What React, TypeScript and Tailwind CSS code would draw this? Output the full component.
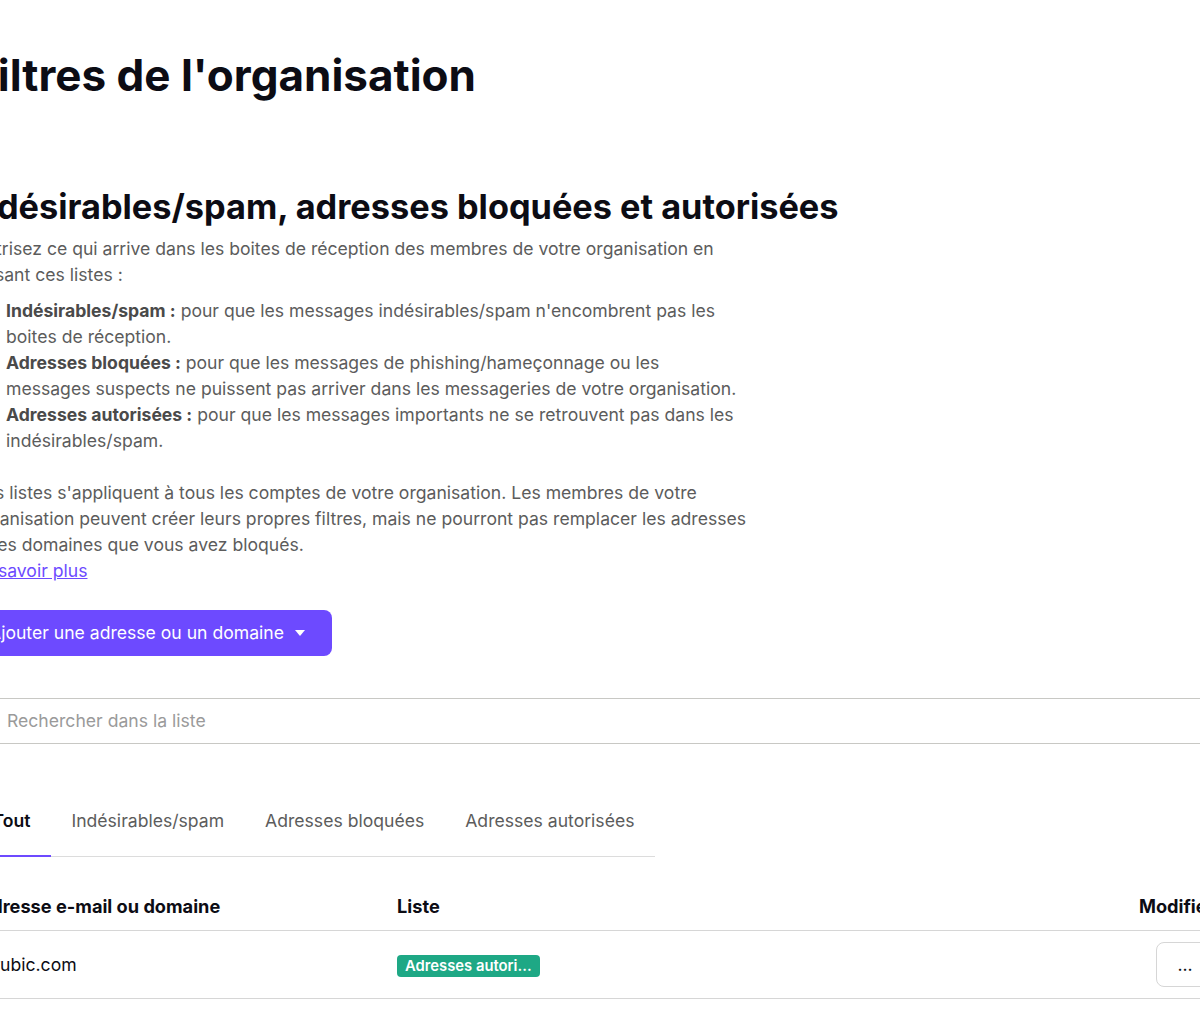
const font = { fontFamily: "Inter, 'Noto Sans', sans-serif" }

export default function App() {
  return (
    <div className="w-[1200px] h-[1024px] overflow-hidden bg-white" style={font}>
      <div className="ml-[-28px] w-[1242px] pt-[47px]">
        <h1 className="text-[44px] leading-[56px] font-bold text-[#0c0c14]">Filtres de l'organisation</h1>

        <h2 className="mt-[82px] -ml-[6px] text-[34.3px] leading-[44px] font-bold text-[#0c0c14]">
          Indésirables/spam, adresses bloquées et autorisées
        </h2>

        <div className="w-[774px] text-[17.6px] leading-[26px] text-[#5c5c5c]">
          <p className="mt-[7px] -ml-[6px]">
            Maîtrisez ce qui arrive dans les boites de réception des membres de votre organisation en utilisant ces listes :
          </p>
          <ul className="mt-[10px] pl-[34px] list-disc">
            <li>
              <strong className="font-bold text-[#4a4a4a]">Indésirables/spam :</strong> pour que les messages indésirables/spam n'encombrent pas les boites de réception.
            </li>
            <li>
              <strong className="font-bold text-[#4a4a4a]">Adresses bloquées :</strong> pour que les messages de phishing/hameçonnage ou les messages suspects ne puissent pas arriver dans les messageries de votre organisation.
            </li>
            <li>
              <strong className="font-bold text-[#4a4a4a]">Adresses autorisées :</strong> pour que les messages importants ne se retrouvent pas dans les indésirables/spam.
            </li>
          </ul>
          <p className="mt-[26px]">
            Ces listes s'appliquent à tous les comptes de votre organisation. Les membres de votre organisation peuvent créer leurs propres filtres, mais ne pourront pas remplacer les adresses et les domaines que vous avez bloqués.
          </p>
          <a href="#" className="block text-[#6d4aff] underline">En savoir plus</a>
        </div>

        <button className="mt-[26px] h-[46px] pl-[17px] pr-[27px] rounded-lg bg-[#6d4aff] text-white text-[17.6px] flex items-center gap-[11px]">
          Ajouter une adresse ou un domaine
          <svg width="10" height="6" viewBox="0 0 10 6" className="fill-white"><path d="M0 0h10L5 6z" /></svg>
        </button>

        <div className="mt-[42px] h-[46px] border border-[#c8c8c4] rounded-lg flex items-center px-[34px] text-[17.6px] text-[#9a9a9a]">
          Rechercher dans la liste
        </div>

        <div className="mt-[60px] flex w-fit border-b border-[#dcdcdc] text-[17.6px] leading-[26px]">
          <div className="px-[20.5px] pb-[21px] pt-1 font-semibold text-[#0c0c14] border-b-2 border-[#6d4aff] -mb-px">Tout</div>
          <div className="px-[20.5px] pb-[21px] pt-1 text-[#5c5c5c]">Indésirables/spam</div>
          <div className="px-[20.5px] pb-[21px] pt-1 text-[#5c5c5c]">Adresses bloquées</div>
          <div className="px-[20.5px] pb-[21px] pt-1 text-[#5c5c5c]">Adresses autorisées</div>
        </div>

        <table className="mt-[36px] w-full text-[17.6px] leading-[26px]">
          <thead>
            <tr className="border-b border-[#d6d6d6]">
              <th className="text-left text-[18.2px] font-bold text-[#0c0c14] pb-[11px] pl-[6px] w-[425px]">Adresse e-mail ou domaine</th>
              <th className="text-left text-[18.2px] font-bold text-[#0c0c14] pb-[11px]">Liste</th>
              <th className="text-right text-[18.2px] font-bold text-[#0c0c14] pb-[11px]">Modifier</th>
            </tr>
          </thead>
          <tbody>
            <tr className="border-b border-[#d6d6d6]">
              <td className="py-[11px] pl-[6px] text-[#0c0c14]">mrubic.com</td>
              <td className="py-[11px]">
                <span className="inline-block rounded bg-[#1ea885] text-white text-[14.8px] font-semibold px-2 leading-[22px]">Adresses autori...</span>
              </td>
              <td className="py-[11px] text-right">
                <button className="w-[58px] h-[45px] border border-[#d6d6d6] rounded-lg text-[#0c0c14] align-middle">...</button>
              </td>
            </tr>
          </tbody>
        </table>
      </div>
    </div>
  )
}
